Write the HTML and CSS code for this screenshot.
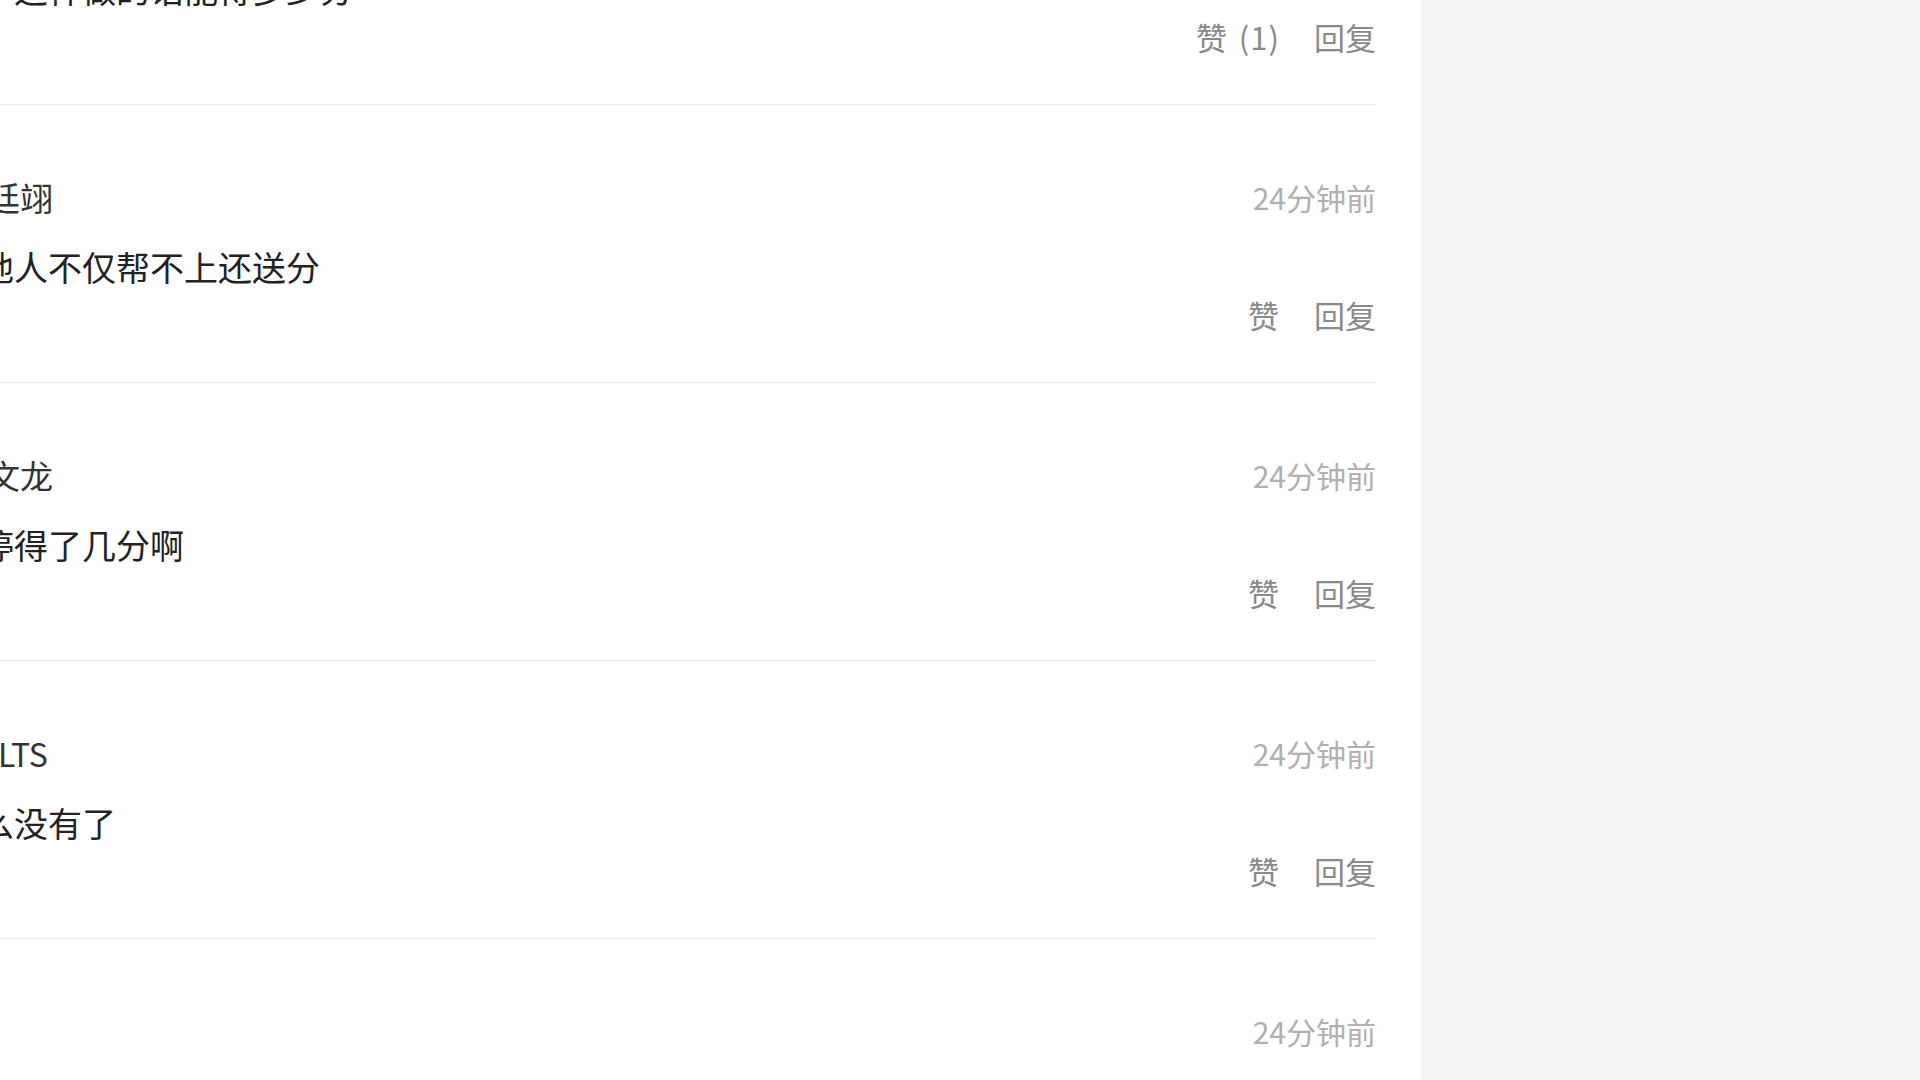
FILE: index.html
```html
<!DOCTYPE html>
<html lang="zh-CN">
<head>
<meta charset="utf-8">
<title>评论</title>
<link rel="stylesheet" href="styles.css">
</head>
<body>
<main class="layout">
  <section class="panel">
    <ul class="comments">
      <li class="comment">
        <div class="comment-head"><span class="name">用户</span><span class="time">24分钟前</span></div>
        <p class="comment-body">个这样做的话能得多少分</p>
        <div class="comment-actions"><a class="action">赞 (1)</a><a class="action">回复</a></div>
      </li>
      <li class="comment">
        <div class="comment-head"><span class="name">廷翊</span><span class="time">24分钟前</span></div>
        <p class="comment-body">他人不仅帮不上还送分</p>
        <div class="comment-actions"><a class="action">赞</a><a class="action">回复</a></div>
      </li>
      <li class="comment">
        <div class="comment-head"><span class="name">文龙</span><span class="time">24分钟前</span></div>
        <p class="comment-body">停得了几分啊</p>
        <div class="comment-actions"><a class="action">赞</a><a class="action">回复</a></div>
      </li>
      <li class="comment">
        <div class="comment-head"><span class="name name-latin">LTS</span><span class="time">24分钟前</span></div>
        <p class="comment-body">么没有了</p>
        <div class="comment-actions"><a class="action">赞</a><a class="action">回复</a></div>
      </li>
      <li class="comment">
        <div class="comment-head"><span class="name"></span><span class="time">24分钟前</span></div>
        <p class="comment-body"></p>
        <div class="comment-actions"><a class="action">赞</a><a class="action">回复</a></div>
      </li>
    </ul>
  </section>
  <aside class="sidebar"></aside>
</main>
</body>
</html>
```
FILE: styles.css
```css
html, body {
  margin: 0;
  padding: 0;
  height: 100%;
  overflow: hidden;
  background: #f4f4f4;
  font-family: "Noto Sans CJK SC", "Microsoft YaHei", "Noto Sans", sans-serif;
}

.layout {
  display: flex;
  height: 100%;
}

.panel {
  width: 1421px;
  flex: none;
  background: #ffffff;
  padding-right: 45px;
  box-sizing: border-box;
}

.sidebar {
  flex: 1;
  background: #f4f4f4;
}

.comments {
  list-style: none;
  margin: -173px 0 0 -20px;
  padding: 0;
}

.comment {
  padding: 72px 0 47px 0;
  border-bottom: 1px solid #ebebeb;
}

.comment-head {
  display: flex;
  justify-content: space-between;
  align-items: center;
  height: 40px;
}

.name {
  font-size: 33px;
  line-height: 40px;
  color: #333333;
  padding-left: 7px;
}

.name-latin {
  padding-left: 18px;
  font-size: 32px;
}

.time {
  font-size: 30px;
  line-height: 40px;
  color: #b0b0b0;
}

.comment-body {
  margin: 30px 0 0 0;
  font-size: 34px;
  line-height: 40px;
  height: 40px;
  color: #222222;
}

.comment-actions {
  margin-top: 8px;
  display: flex;
  justify-content: flex-end;
  height: 40px;
}

.action {
  font-size: 31px;
  line-height: 40px;
  color: #8a8a8a;
  margin-left: 34px;
}

.action:first-child {
  word-spacing: 3px;
  letter-spacing: 1px;
}
```
